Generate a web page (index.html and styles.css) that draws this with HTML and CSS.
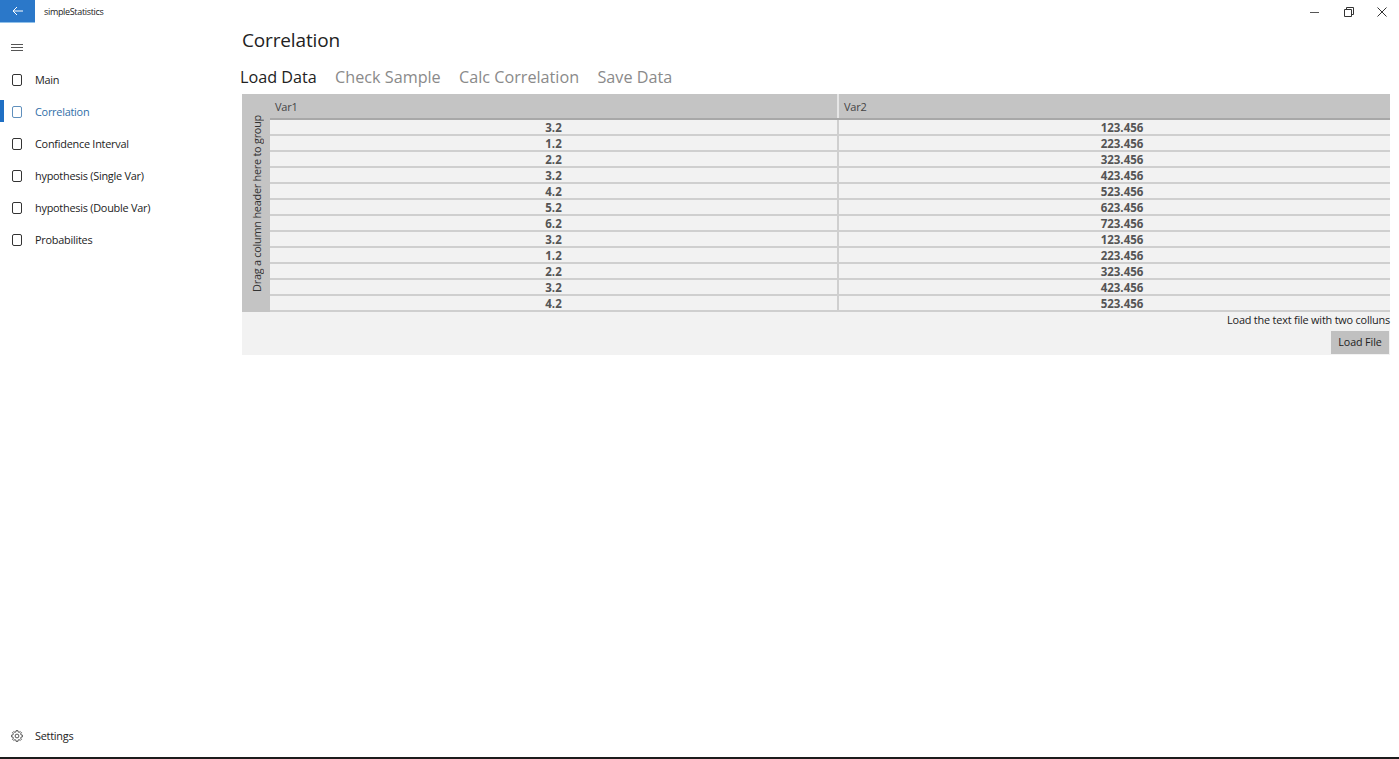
FILE: index.html
```html
<!DOCTYPE html>
<html lang="en">
<head>
<meta charset="utf-8">
<title>simpleStatistics</title>
<link rel="stylesheet" href="styles.css">
</head>
<body>
<div class="window">
  <header class="titlebar">
    <div class="back"><svg width="12" height="12" viewBox="0 0 12 12"><path d="M1 6H11M5 2L1 6L5 10" fill="none" stroke="#fff" stroke-width="1"/></svg></div>
    <div class="apptitle">simpleStatistics</div>
    <div class="caption">
      <svg class="cap" width="10" height="10" viewBox="0 0 10 10"><path d="M0 5.500H9" stroke="#555" stroke-width="1"/></svg>
      <svg class="cap" width="10" height="10" viewBox="0 0 10 10"><path d="M.5 2.500H7.500V9.500H.5ZM2.500 2.500V.5H9.500V7.500H7.500" fill="none" stroke="#333" stroke-width="1"/></svg>
      <svg class="cap" width="10" height="10" viewBox="0 0 10 10"><path d="M.5 .5L9.500 9.500M9.500 .5L.5 9.500" stroke="#333" stroke-width="1"/></svg>
    </div>
  </header>
  <div class="body">
    <nav class="nav">
      <div class="burger"><svg width="12" height="10" viewBox="0 0 12 10"><path d="M0 1.500H12M0 4.500H12M0 7.500H12" stroke="#555" stroke-width="1"/></svg></div>
      <div class="navitem"><svg class="ni" width="10" height="12" viewBox="0 0 10 12"><rect x=".5" y=".5" width="9" height="11" rx="1.500"/></svg><span>Main</span></div>
      <div class="navitem active"><svg class="ni" width="10" height="12" viewBox="0 0 10 12"><rect x=".5" y=".5" width="9" height="11" rx="1.500"/></svg><span>Correlation</span></div>
      <div class="navitem"><svg class="ni" width="10" height="12" viewBox="0 0 10 12"><rect x=".5" y=".5" width="9" height="11" rx="1.500"/></svg><span>Confidence Interval</span></div>
      <div class="navitem"><svg class="ni" width="10" height="12" viewBox="0 0 10 12"><rect x=".5" y=".5" width="9" height="11" rx="1.500"/></svg><span>hypothesis (Single Var)</span></div>
      <div class="navitem"><svg class="ni" width="10" height="12" viewBox="0 0 10 12"><rect x=".5" y=".5" width="9" height="11" rx="1.500"/></svg><span>hypothesis (Double Var)</span></div>
      <div class="navitem"><svg class="ni" width="10" height="12" viewBox="0 0 10 12"><rect x=".5" y=".5" width="9" height="11" rx="1.500"/></svg><span>Probabilites</span></div>
      <div class="navitem settings">
        <svg class="gear" width="12" height="12" viewBox="-12 -12 24 24">
          <defs><path id="tooth" d="M-2.060 -8.250L-1.720 -10.870L1.720 -10.870L2.060 -8.250L4.380 -7.290"/></defs>
          <circle r="3.800"/>
          <use href="#tooth"/>
          <use href="#tooth" transform="rotate(45)"/>
          <use href="#tooth" transform="rotate(90)"/>
          <use href="#tooth" transform="rotate(135)"/>
          <use href="#tooth" transform="rotate(180)"/>
          <use href="#tooth" transform="rotate(225)"/>
          <use href="#tooth" transform="rotate(270)"/>
          <use href="#tooth" transform="rotate(315)"/>
        </svg>
        <span>Settings</span>
      </div>
    </nav>
    <main class="main">
      <h1 class="pagetitle">Correlation</h1>
      <div class="pivot">
        <span class="tab current">Load Data</span>
        <span class="tab">Check Sample</span>
        <span class="tab">Calc Correlation</span>
        <span class="tab">Save Data</span>
      </div>
      <section class="panel">
        <div class="gridwrap">
          <div class="groupbar"><span>Drag a column header here to group</span></div>
          <div class="grid">
            <div class="row head"><div class="cell c1">Var1</div><div class="cell c2">Var2</div></div>
            <div class="row"><div class="cell c1">3.2</div><div class="cell c2">123.456</div></div>
            <div class="row"><div class="cell c1">1.2</div><div class="cell c2">223.456</div></div>
            <div class="row"><div class="cell c1">2.2</div><div class="cell c2">323.456</div></div>
            <div class="row"><div class="cell c1">3.2</div><div class="cell c2">423.456</div></div>
            <div class="row"><div class="cell c1">4.2</div><div class="cell c2">523.456</div></div>
            <div class="row"><div class="cell c1">5.2</div><div class="cell c2">623.456</div></div>
            <div class="row"><div class="cell c1">6.2</div><div class="cell c2">723.456</div></div>
            <div class="row"><div class="cell c1">3.2</div><div class="cell c2">123.456</div></div>
            <div class="row"><div class="cell c1">1.2</div><div class="cell c2">223.456</div></div>
            <div class="row"><div class="cell c1">2.2</div><div class="cell c2">323.456</div></div>
            <div class="row"><div class="cell c1">3.2</div><div class="cell c2">423.456</div></div>
            <div class="row"><div class="cell c1">4.2</div><div class="cell c2">523.456</div></div>
          </div>
        </div>
        <div class="hint">Load the text file with two colluns</div>
        <div class="actions"><button class="btn">Load File</button></div>
      </section>
    </main>
  </div>
  <div class="taskbar-edge"></div>
</div>
</body>
</html>
```
FILE: styles.css
```css
* { box-sizing: border-box; }
html, body { margin: 0; padding: 0; height: 100%; background: #fff; overflow: hidden; }
body { font-family: "Open Sans", "Noto Sans", sans-serif; color: #222; }
.window { width: 1399px; height: 759px; display: flex; flex-direction: column; }
.titlebar { height: 24px; display: flex; align-items: flex-start; flex: none; }
.back { width: 35px; height: 23px; background: #2b78c9; border-bottom: 1px solid #8fc0ea; display: flex; align-items: center; justify-content: center; }
.apptitle { margin-left: 9px; font-size: 9px; line-height: 23px; letter-spacing: -.33px; color: #222; }
.caption { margin-left: auto; display: flex; gap: 23.500px; padding: 7px 12px 0 0; }
.body { flex: 1; display: flex; min-height: 0; }
.nav { width: 242px; flex: none; display: flex; flex-direction: column; }
.burger { height: 31px; margin-top: 8px; padding-left: 11px; display: flex; align-items: center; }
.navitem { height: 32px; display: flex; align-items: center; font-size: 10.900px; letter-spacing: -.25px; padding-left: 12px; gap: 13px; position: relative; color: #222; }
.ni { fill: none; stroke: #333; stroke-width: 1; margin-top: 2px; }
.navitem.active { color: #2f6ea8; }
.navitem.active .ni { stroke: #5f8fbc; }
.navitem.active::before { content: ""; position: absolute; left: 0; top: 5px; bottom: 5px; width: 4px; background: #1f6fc4; }
.settings { margin-top: auto; margin-bottom: 6px; padding-left: 11px; gap: 12px; }
.gear { fill: none; stroke: #444; stroke-width: 1.800; margin-top: 2px; }
.main { flex: 1; min-width: 0; }
.pagetitle { font-weight: 400; font-size: 19px; letter-spacing: -.15px; line-height: 28px; margin: 2px 0 0; color: #222; }
.pivot { display: flex; gap: 18.300px; margin-top: 11px; margin-left: -2px; height: 24px; align-items: center; }
.tab { font-size: 16.200px; color: #8a8a8a; }
.tab.current { color: #222; }
.panel { margin-top: 5px; width: 1148px; height: 261px; background: #f2f2f2; }
.gridwrap { display: flex; height: 218px; }
.groupbar { width: 28px; flex: none; background: #c4c4c4; display: flex; align-items: center; justify-content: center; }
.groupbar span { writing-mode: vertical-rl; transform: rotate(180deg); font-size: 10.900px; letter-spacing: -.25px; color: #333; white-space: nowrap; }
.grid { flex: 1; min-width: 0; overflow: hidden; display: flex; flex-direction: column; }
.row { display: flex; height: 16px; flex: none; border-bottom: 2px solid #cfcfcf; font-weight: 700; font-size: 11.500px; color: #555; }
.row.head { height: 26px; background: #c4c4c4; border-bottom: 2px solid #a8a8a8; font-weight: 400; font-size: 11px; letter-spacing: -.2px; color: #444; }
.cell { display: flex; align-items: center; justify-content: center; line-height: 1; padding-top: 2px; flex: none; }
.c1 { width: 569px; border-right: 2px solid #cfcfcf; }
.c2 { width: 566px; }
.head .cell { justify-content: flex-start; padding: 0 0 0 5px; }
.head .c1 { border-right-color: #e6e6e6; }
.hint { text-align: right; font-size: 10.900px; letter-spacing: -.2px; line-height: 16px; color: #222; }
.actions { display: flex; justify-content: flex-end; padding: 3px 1px 0 0; }
.btn { width: 58px; height: 23px; border: 0; background: #c0c0c0; font: 10.700px "Open Sans", "Noto Sans", sans-serif; letter-spacing: -.1px; color: #222; padding: 0 0 2px; }
.taskbar-edge { height: 2px; background: #1c1c1c; flex: none; }
```
